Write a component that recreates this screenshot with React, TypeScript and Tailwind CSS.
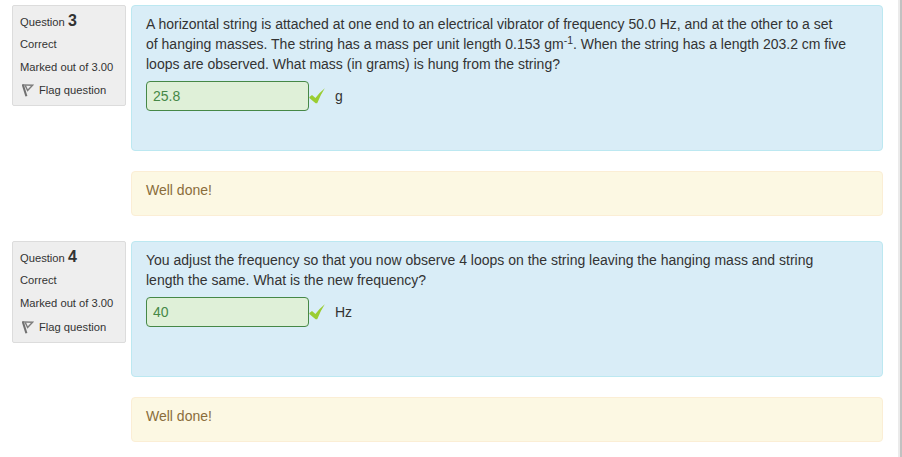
import type { ReactNode } from "react";

function FlagIcon() {
  return (
    <svg width="12" height="14" viewBox="0 0 12 14" fill="none" className="shrink-0">
      <path d="M0.8 1.6 L4.4 13.2" stroke="#707070" strokeWidth="2" />
      <path d="M0.2 1.9 L10.6 2.2 L5.6 7.6 L3.2 2.4" stroke="#7c7c7c" strokeWidth="1.4" />
    </svg>
  );
}

function CheckIcon() {
  return (
    <svg width="16" height="16" viewBox="0 0 16 16" className="shrink-0">
      <path d="M0.4 9 L3 7.1 L6.4 9.9 Q10 5 15.8 0.2 Q11.6 6.5 8.2 15.2 L6.6 15.2 Q3.6 12.8 0.4 10 Z" fill="#9acd32" />
    </svg>
  );
}

interface QuestionProps {
  number: number;
  infoClass: string;
  flagClass: string;
  bodyClass: string;
  answer: string;
  unit: string;
  children: ReactNode;
}

function Question({ number, infoClass, flagClass, bodyClass, answer, unit, children }: QuestionProps) {
  return (
    <section className="flex items-start gap-[5px]">
      <aside className={`w-[114px] shrink-0 rounded-[2px] border border-[#dcdcdc] bg-[#eeeeee] px-[7px] text-[11.2px] leading-[16px] whitespace-nowrap ${infoClass}`}>
        <h3 className="mt-[5px] h-5 leading-5">
          Question <span className="text-[16px] font-bold">{number}</span>
        </h3>
        <div className="mt-[5px]">Correct</div>
        <div className="mt-[7px]">Marked out of 3.00</div>
        <div className={`flex items-center gap-[5px] pl-[2px] ${flagClass}`}>
          <FlagIcon />
          <span>Flag question</span>
        </div>
      </aside>
      <div className="w-[752px] shrink-0">
        <div className={`rounded-[4px] border border-[#bce8f1] bg-[#d9edf7] px-[14px] pt-2 ${bodyClass}`}>
          <div className="whitespace-nowrap">{children}</div>
          <div className="mt-[7px] flex items-center">
            <input
              readOnly
              value={answer}
              className="h-[30px] w-[163px] rounded-[4px] border border-[#468847] bg-[#dff0d8] px-[6px] text-[#468847] outline-none"
            />
            <CheckIcon />
            <span className="ml-[10px]">{unit}</span>
          </div>
        </div>
        <div className="mt-5 h-[45px] rounded-[4px] border border-[#fbeed5] bg-[#fcf8e3] px-[14px] pt-2 text-[#8a6d3b]">
          Well done!
        </div>
      </div>
    </section>
  );
}

export default function App() {
  return (
    <div className="flex h-[457px] w-[902px] justify-between overflow-hidden bg-white font-['Liberation_Sans',Arial,sans-serif] text-[14px] leading-5 text-[#333333]">
      <main className="flex flex-col gap-[25px] pt-[5px] pl-3">
        <Question number={3} infoClass="h-[101px]" flagClass="mt-[7px]" bodyClass="h-[146px]" answer="25.8" unit="g">
          <p>A horizontal string is attached at one end to an electrical vibrator of frequency 50.0 Hz, and at the other to a set</p>
          <p>
            of hanging masses. The string has a mass per unit length 0.153 gm
            <sup className="-top-[5px] text-[10.5px] leading-none">-1</sup>. When the string has a length 203.2 cm five
          </p>
          <p>loops are observed. What mass (in grams) is hung from the string?</p>
        </Question>
        <Question number={4} infoClass="h-[102px]" flagClass="mt-[8px]" bodyClass="h-[136px]" answer="40" unit="Hz">
          <p>You adjust the frequency so that you now observe 4 loops on the string leaving the hanging mass and string</p>
          <p>length the same. What is the new frequency?</p>
        </Question>
      </main>
      <div className="w-1 border-r-2 border-[#c1c1c1] bg-[#ebebeb]" />
    </div>
  );
}
